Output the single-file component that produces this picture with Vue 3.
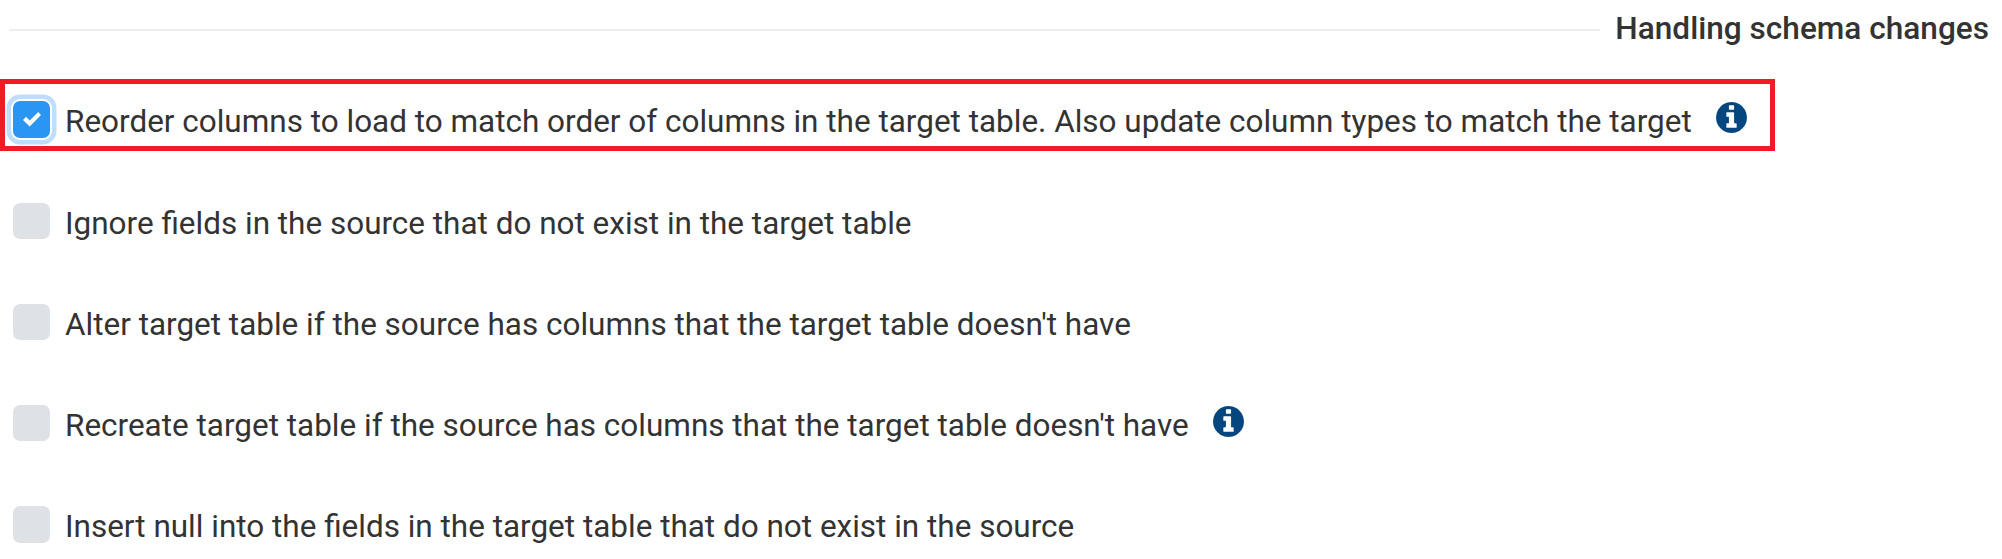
<script setup>
import { reactive } from 'vue'

const options = reactive([
  {
    id: 'reorder',
    label: 'Reorder columns to load to match order of columns in the target table. Also update column types to match the target',
    checked: true,
    info: true,
    highlighted: true
  },
  {
    id: 'ignore',
    label: 'Ignore fields in the source that do not exist in the target table',
    checked: false
  },
  {
    id: 'alter',
    label: "Alter target table if the source has columns that the target table doesn't have",
    checked: false
  },
  {
    id: 'recreate',
    label: "Recreate target table if the source has columns that the target table doesn't have",
    checked: false,
    info: true
  },
  {
    id: 'insert-null',
    label: 'Insert null into the fields in the target table that do not exist in the source',
    checked: false
  }
])

function toggle(option) {
  option.checked = !option.checked
}
</script>


<template>
  <section class="schema">
    <div class="heading">
      <span class="line"></span>
      <h2 class="title">Handling schema changes</h2>
    </div>

    <div class="options">
      <div
        v-for="option in options"
        :key="option.id"
        class="option"
        :class="{ highlighted: option.highlighted }"
        @click="toggle(option)"
      >
        <span class="box" :class="{ checked: option.checked }" role="checkbox" :aria-checked="option.checked">
          <svg v-if="option.checked" class="check" viewBox="0 0 18 15">
            <path d="M0 8 L3 4.8 L6.7 8.5 L15.2 0 L18 3 L6.7 14.4 Z" />
          </svg>
        </span>
        <span class="label">{{ option.label }}</span>
        <svg v-if="option.info" class="info" viewBox="0 128 1536 1536">
          <path d="M1024 1376v-160q0-14-9-23t-23-9h-96v-512q0-14-9-23t-23-9h-320q-14 0-23 9t-9 23v160q0 14 9 23t23 9h96v320h-96q-14 0-23 9t-9 23v160q0 14 9 23t23 9h448q14 0 23-9t9-23zm-128-896v-160q0-14-9-23t-23-9h-192q-14 0-23 9t-9 23v160q0 14 9 23t23 9h192q14 0 23-9t9-23zm640 416q0 209-103 385.5t-279.5 279.5-385.5 103-385.5-103-279.5-279.5-103-385.5 103-385.5 279.5-279.5 385.5-103 385.5 103 279.5 279.5 103 385.5z" />
        </svg>
      </div>
    </div>
  </section>
</template>


<style>
body {
  margin: 0;
  background-color: #fff;
  overflow: hidden;
}
</style>

<style scoped>
.schema {
  height: 559px;
  font-family: Roboto, "Liberation Sans", sans-serif;
  font-size: 31.48px;
  color: #333;
}

.heading {
  display: flex;
  align-items: center;
  height: 60px;
  padding: 0 13px 0 9px;
}

.line {
  flex: 1;
  height: 2px;
  background-color: #eee;
}

.title {
  margin: 0 0 2px 15px;
  font-size: 31.6px;
  font-weight: 500;
  line-height: 44px;
  white-space: nowrap;
}

.options {
  display: flex;
  flex-direction: column;
  align-items: flex-start;
  gap: 29.25px;
  padding-top: 19.25px;
}

.option {
  display: flex;
  align-items: flex-start;
  box-sizing: border-box;
  height: 72px;
  padding: 0 23px 0 8px;
  border: 5px solid transparent;
  cursor: pointer;
}

.highlighted {
  border-color: #ee1c25;
}

.box {
  display: flex;
  align-items: center;
  justify-content: center;
  width: 37px;
  height: 36.4px;
  margin-top: 17px;
  border-radius: 7px;
  background-color: #dee2e6;
}

.box.checked {
  background-color: #2b95f4;
  box-shadow: 0 0 0 2px #fff, 0 0 0 6.5px #bfdeff;
}

.check {
  width: 18px;
  height: 15px;
  fill: #fff;
}

.label {
  margin: 16px 0 0 15px;
  line-height: 44px;
  white-space: nowrap;
}

.info {
  width: 31px;
  height: 31px;
  margin: 17.5px 0 0 24.4px;
  fill: #05467e;
}
</style>
